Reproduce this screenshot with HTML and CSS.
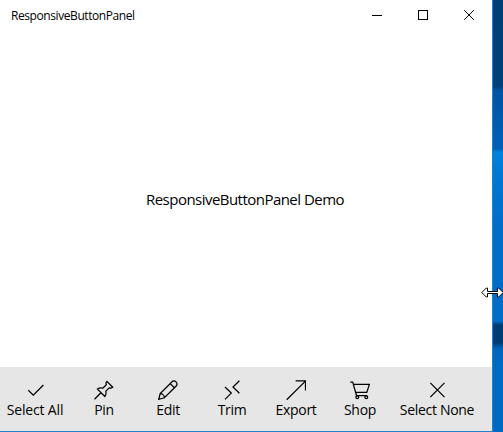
FILE: index.html
```html
<!DOCTYPE html>
<html lang="en">
<head>
<meta charset="utf-8">
<title>ResponsiveButtonPanel</title>
<link rel="stylesheet" href="styles.css">
</head>
<body>
<main class="window">
  <header class="titlebar">
    <h1 class="title">ResponsiveButtonPanel</h1>
    <div class="controls">
      <button class="control" aria-label="Minimize"><svg width="11" height="10" viewBox="0 0 11 10" shape-rendering="crispEdges"><path d="M0 5.5H10"/></svg></button>
      <button class="control" aria-label="Maximize"><svg width="11" height="10" viewBox="0 0 11 10" shape-rendering="crispEdges"><path d="M.5.5H9.5V9.5H.5Z"/></svg></button>
      <button class="control" aria-label="Close"><svg width="11" height="10" viewBox="0 0 11 10"><path d="M.2.2 9.8 9.8M9.8.2.2 9.8"/></svg></button>
    </div>
  </header>
  <section class="content"><p class="demo">ResponsiveButtonPanel Demo</p></section>
  <nav class="panel">
    <button class="item item-all"><svg class="icon" viewBox="0 0 20 20"><path d="M2.3 10.2 7.3 15.2 17.4 5"/></svg><span class="label label-all">Select All</span></button>
    <button class="item"><svg class="icon" viewBox="0 0 20 20"><path d="M.5 19.2 6.9 12.8M12.9 1.4 18.7 7.2 17.2 8 15.2 7.8 11.8 11.2C12.5 13.3 12 15 10.9 16.5L3.5 9.1C5 8 6.8 7.7 8.8 8.2L12.3 4.8 12 2.8Z"/></svg><span class="label">Pin</span></button>
    <button class="item"><svg class="icon" viewBox="0 0 20 20"><path d="M.7 19.3 2.2 13.6 13.8 2C15 .7 16.6.5 18 1.9S19.3 5 18 6.2L6.4 17.8ZM2.2 13.6C4.5 13.6 6.4 15.5 6.4 17.8M12.2 3.6 16.4 7.8"/></svg><span class="label">Edit</span></button>
    <button class="item"><svg class="icon" viewBox="0 0 20 20"><path d="M3 7 9.3 13.1 3 19.4M17.4.7 11 7 17.4 13.2"/></svg><span class="label">Trim</span></button>
    <button class="item"><svg class="icon" viewBox="0 0 20 20"><path d="M.7 19.8 19.4 1.1M9.6.8H19.5V10.5"/></svg><span class="label">Export</span></button>
    <button class="item"><svg class="icon" viewBox="0 0 20 20"><path d="M.3 2H2.7L6.5 15.5H17.2M3.3 4.4H19.4L16.8 12.4H5.6"/><circle cx="7.3" cy="17.3" r="1.4"/><circle cx="16.3" cy="17.3" r="1.4"/></svg><span class="label">Shop</span></button>
    <button class="item item-none"><svg class="icon" viewBox="0 0 20 20"><path d="M3.3 2.9 17.5 17.1M17.5 2.9 3.3 17.1"/></svg><span class="label">Select None</span></button>
  </nav>
</main>
<aside class="desktop"></aside>
<svg class="cursor" viewBox="0 0 22 11" aria-hidden="true"><path d="M.8 5.5 5.3 1H6.5V4.5H16.5V1H17.7L22.2 5.5 17.7 10H16.5V6.5H6.5V10H5.3Z"/></svg>
</body>
</html>
```
FILE: styles.css
```css
* { box-sizing: border-box; }
body {
  margin: 0;
  height: 432px;
  display: flex;
  position: relative;
  overflow: hidden;
  color: #000;
  font-family: "Open Sans", "Noto Sans", sans-serif;
}
button { border: 0; padding: 0; background: none; font: inherit; color: inherit; }
svg { display: block; fill: none; stroke: #000; }
.window {
  width: 493px;
  flex: none;
  display: flex;
  flex-direction: column;
  background: #fff;
  border-right: 1px solid #2482cb;
  border-bottom: 1px solid #2482cb;
}
.titlebar { display: flex; height: 30px; justify-content: space-between; align-items: center; padding-left: 11px; }
.title { margin: 0; font-size: 12px; font-weight: 400; letter-spacing: -.42px; white-space: nowrap; }
.controls { display: flex; }
.control { width: 46px; height: 30px; display: flex; align-items: center; justify-content: center; }
.content { flex: 1; display: flex; justify-content: center; padding: 158px 2px 0 0; }
.demo { margin: 0; height: 22px; line-height: 22px; font-size: 15px; letter-spacing: -.53px; white-space: nowrap; }
.panel { height: 64px; display: flex; background: #e6e6e6; }
.item { width: 64px; flex: none; display: flex; flex-direction: column; align-items: center; padding-top: 13px; }
.item-all { width: 72px; }
.item-none { width: 90px; }
.icon { width: 20px; height: 20px; stroke-width: 1.25; }
.label { height: 20px; line-height: 20px; font-size: 14px; letter-spacing: -.3px; white-space: nowrap; }
.label-all { margin-left: -2px; letter-spacing: -.15px; }
.desktop {
  flex: 1;
  background: linear-gradient(#003e75 0, #00407a 87px, #0053a2 90px, #0059ac 115px, #0060b8 149px, #0083df 152px, #0078d4 175px, #006dc9 225px, #006dc8 321px, #003d75 325px, #003d75 343px, #0063bb 348px, #006bc5 365px, #0069c2 432px);
}
.cursor { position: absolute; left: 481px; top: 287px; width: 22px; height: 11px; fill: #fff; stroke: #000; stroke-width: 1; }
```
